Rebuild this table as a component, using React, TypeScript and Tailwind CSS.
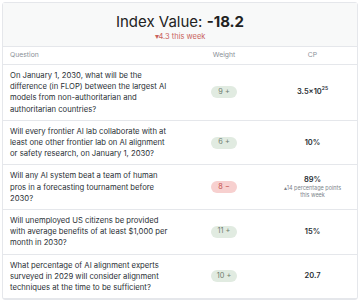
import React from "react";

type Row = {
  q: string;
  weight: number;
  up: boolean;
  cp: React.ReactNode;
  note?: string;
};

const rows: Row[] = [
  {
    q: "On January 1, 2030, what will be the difference (in FLOP) between the largest AI models from non-authoritarian and authoritarian countries?",
    weight: 9,
    up: true,
    cp: (
      <span>
        3.5×10<sup className="text-[5px] align-[2px]">25</sup>
      </span>
    ),
  },
  {
    q: "Will every frontier AI lab collaborate with at least one other frontier lab on AI alignment or safety research, on January 1, 2030?",
    weight: 6,
    up: true,
    cp: "10%",
  },
  {
    q: "Will any AI system beat a team of human pros in a forecasting tournament before 2030?",
    weight: 8,
    up: false,
    cp: "89%",
    note: "14 percentage points this week",
  },
  {
    q: "Will unemployed US citizens be provided with average benefits of at least $1,000 per month in 2030?",
    weight: 11,
    up: true,
    cp: "15%",
  },
  {
    q: "What percentage of AI alignment experts surveyed in 2029 will consider alignment techniques at the time to be sufficient?",
    weight: 10,
    up: true,
    cp: "20.7",
  },
];

export default function App() {
  return (
    <div
      className="h-[301px] overflow-hidden bg-white px-[2px] pt-[2px]"
      style={{ fontFamily: "Inter, 'Noto Sans', sans-serif" }}
    >
      <div className="rounded-[3px] border border-[#e5e7eb]">
        {/* header */}
        <div className="flex h-[44px] flex-col items-center justify-center border-b border-[#e5e7eb] bg-[#f8f9f9] pt-[3px]">
          <div className="text-[15px] leading-[19px] text-[#222]">
            Index Value: <span className="font-bold">-18.2</span>
          </div>
          <div className="mt-[1px] text-[7.5px] leading-[9px] text-[#c8625c]">
            ▾4.3 this week
          </div>
        </div>

        {/* column titles */}
        <div className="grid h-[18px] grid-cols-[177px_88px_1fr] items-center border-b border-[#e5e7eb] text-[6.8px] text-[#8a9097]">
          <div className="pl-[7px]">Question</div>
          <div className="text-center">Weight</div>
          <div className="text-center">CP</div>
        </div>

        {rows.map((r, i) => (
          <div
            key={i}
            className="grid grid-cols-[177px_88px_1fr] items-center border-b border-[#e5e7eb]"
          >
            <div className="py-[5px] pl-[7px] pr-[6px] text-[7.7px] leading-[11.2px] text-[#2a2f35]">
              {r.q}
            </div>
            <div className="flex justify-center">
              <span
                className={
                  r.up
                    ? "flex h-[12px] w-[26px] items-center justify-center rounded-full bg-[#e1ebe1] text-[7.3px] text-[#6f7d70]"
                    : "flex h-[12px] w-[26px] items-center justify-center rounded-full bg-[#f7d0cf] text-[7.3px] text-[#c4504c]"
                }
              >
                {r.weight} {r.up ? "+" : "−"}
              </span>
            </div>
            <div className="flex flex-col items-center text-center">
              <div className="text-[7.5px] font-semibold leading-[10px] text-[#2a2f35]">
                {r.cp}
              </div>
              {r.note && (
                <div className="w-[58px] text-[5.5px] leading-[7.5px] text-[#7d848b]">
                  ▴{r.note}
                </div>
              )}
            </div>
          </div>
        ))}
      </div>
    </div>
  );
}
